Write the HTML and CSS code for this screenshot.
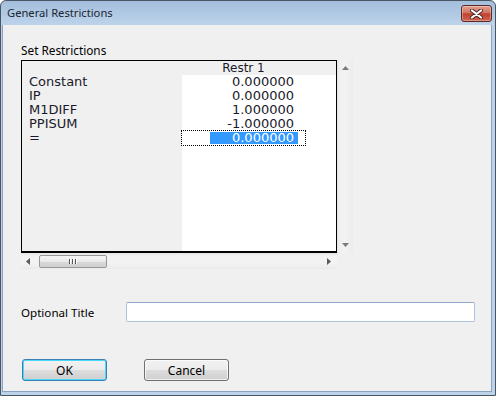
FILE: index.html
```html
<!DOCTYPE html>
<html lang="en">

<head>
  <meta charset="UTF-8">
  <title>General Restrictions</title>
  <link rel="stylesheet" href="styles.css">
</head>

<body>
  <div class="window">
    <div class="titlebar">
      <span class="title">General Restrictions</span>
      <div class="close">
        <svg width="13" height="10" viewBox="0 0 13 10">
          <path d="M2 1.5 L11 8.5 M11 1.5 L2 8.5" stroke="#4a2a2a" stroke-width="4" stroke-linecap="round" />
          <path d="M2 1.5 L11 8.5 M11 1.5 L2 8.5" stroke="#fff" stroke-width="2.2" stroke-linecap="round" />
        </svg>
      </div>
    </div>

    <div class="client">
      <div class="group-label">Set Restrictions</div>

      <div class="grid-wrap">
        <div class="grid">
          <div class="col labels">
            <div class="hdr"></div>
            <div class="cell">Constant</div>
            <div class="cell">IP</div>
            <div class="cell">M1DIFF</div>
            <div class="cell">PPISUM</div>
            <div class="cell">=</div>
          </div>
          <div class="col data">
            <div class="hdr">Restr 1</div>
            <div class="cell">0.000000</div>
            <div class="cell">0.000000</div>
            <div class="cell">1.000000</div>
            <div class="cell">-1.000000</div>
            <div class="cell current"><span class="sel">0.000000</span></div>
          </div>
          <div class="col rest">
            <div class="hdr"></div>
          </div>
        </div>

        <div class="vscroll">
          <svg width="7" height="4"><polygon points="0,4 3.5,0 7,4" fill="#7a7a7a" /></svg>
          <svg width="7" height="4"><polygon points="0,0 3.5,4 7,0" fill="#7a7a7a" /></svg>
        </div>

        <div class="hscroll">
          <svg class="arrow" width="4" height="7"><polygon points="4,0 0,3.5 4,7" fill="#5a5a5a" /></svg>
          <div class="thumb">
            <span class="grip"></span><span class="grip"></span><span class="grip"></span>
          </div>
          <svg class="arrow right" width="4" height="7"><polygon points="0,0 4,3.5 0,7" fill="#5a5a5a" /></svg>
        </div>

        <div class="corner"></div>
      </div>

      <div class="title-row">
        <span class="field-label">Optional Title</span>
        <input class="text-input" type="text">
      </div>

      <div class="buttons">
        <button class="btn default">OK</button>
        <button class="btn">Cancel</button>
      </div>
    </div>
  </div>
</body>

</html>
```

FILE: styles.css
```css
* {
  box-sizing: border-box;
}

body {
  margin: 0;
  background: #fff;
  font-family: "Noto Sans", "Open Sans", sans-serif;
  font-size: 12px;
  color: #000;
}

.window {
  width: 496px;
  height: 396px;
  border: 1px solid #4a5562;
  border-radius: 6px 6px 0 0;
  background: linear-gradient(#a3bedc, #bcd3ea 24px, #bcd3ea);
  display: flex;
  flex-direction: column;
  overflow: hidden;
}

.titlebar {
  height: 24px;
  flex-shrink: 0;
  display: flex;
  justify-content: space-between;
  align-items: flex-start;
  padding: 0 3px 0 6px;
}

.title {
  line-height: 24px;
  font-size: 11.2px;
  color: #1b2533;
}

.close {
  margin-top: 4px;
  width: 31px;
  height: 17px;
  border: 1px solid #5b2b2b;
  border-radius: 3px;
  background: linear-gradient(#e4a092, #d27563 45%, #c0412f 52%, #cf6450);
  box-shadow: inset 0 0 0 1px rgba(255, 255, 255, 0.3);
  display: flex;
  align-items: center;
  justify-content: center;
}

.client {
  flex: 1;
  margin: 0 3px 3px 1px;
  background: #f0f0f0;
  border: 1px solid #8aa3c1;
  border-top: none;
  padding: 17px 0 0 18px;
}

.group-label {
  line-height: 16px;
  font-size: 11.8px;
}

/* grid control + scrollbars */
.grid-wrap {
  margin-top: 2px;
  display: grid;
  grid-template-columns: 316px 16px;
  grid-template-rows: 193px 16px;
}

.grid {
  display: grid;
  grid-template-columns: 160px 123px 1fr;
  border: 1px solid #000;
  border-bottom-width: 2px;
  background: #fff;
  font-family: "DejaVu Sans", sans-serif;
  font-size: 13px;
  color: #1a1a2a;
}

.col .hdr {
  height: 14px;
  line-height: 14px;
  font-size: 12px;
  background: #f0f0f0;
}

.col .cell {
  height: 14px;
  line-height: 14px;
}

.labels {
  background: #f0f0f0;
}

.labels .cell {
  padding-left: 7px;
}

.data .hdr {
  text-align: center;
}

.data .cell {
  text-align: right;
  padding-right: 11px;
}

.data .cell.current {
  outline: 1px dotted #000;
  padding-right: 7px;
  padding-top: 1px;
  display: flex;
  justify-content: flex-end;
}

.sel {
  display: block;
  width: 88px;
  height: 12px;
  line-height: 12px;
  background: #3399ff;
  color: #fff;
  padding-right: 4px;
  text-align: right;
}

.vscroll {
  background: linear-gradient(to right, #e2e2e2, #efefef 2px, #f3f3f3 50%, #ececec);
  display: flex;
  flex-direction: column;
  align-items: center;
  justify-content: space-between;
  padding: 6px 0 6px 1px;
}

.hscroll {
  background: linear-gradient(#e4e4e4, #f2f2f2 3px, #f3f3f3 60%, #ebebeb);
  display: flex;
  align-items: center;
  padding: 0 6px 0 5px;
}

.hscroll .arrow.right {
  margin-left: auto;
}

.thumb {
  margin-left: 9px;
  width: 68px;
  height: 13px;
  border: 1px solid #979797;
  border-radius: 2px;
  background: linear-gradient(#f6f6f6, #e9e9e9 50%, #d9d9d9 51%, #d0d0d0);
  display: flex;
  align-items: center;
  justify-content: center;
  gap: 1px;
}

.grip {
  width: 1px;
  height: 5px;
  background: #555;
  box-shadow: 1px 0 0 #fff;
  margin-right: 1px;
}

.corner {
  background: #f0f0f0;
}

/* title field */
.title-row {
  margin-top: 33px;
  display: flex;
  align-items: center;
  height: 20px;
}

.field-label {
  width: 105px;
  font-size: 11.6px;
}

.text-input {
  width: 349px;
  height: 20px;
  border: 1px solid #abc1dc;
  border-top-color: #8ea8c8;
  border-radius: 2px;
  background: #fff;
  outline: none;
}

/* buttons */
.buttons {
  margin-top: 37px;
  display: flex;
  gap: 37px;
  padding-left: 1px;
}

.btn {
  width: 85px;
  height: 22px;
  border: 1px solid #707070;
  border-radius: 3px;
  background: linear-gradient(#f2f2f2, #ebebeb 50%, #dddddd 51%, #cfcfcf);
  box-shadow: inset 0 0 0 1px rgba(255, 255, 255, 0.7);
  font-family: "Noto Sans", "Open Sans", sans-serif;
  font-size: 12px;
  color: #000;
  padding: 0;
}

.btn.default {
  border-color: #3c7fb1;
  box-shadow: inset 0 0 0 1px #48d8fb;
}
```
